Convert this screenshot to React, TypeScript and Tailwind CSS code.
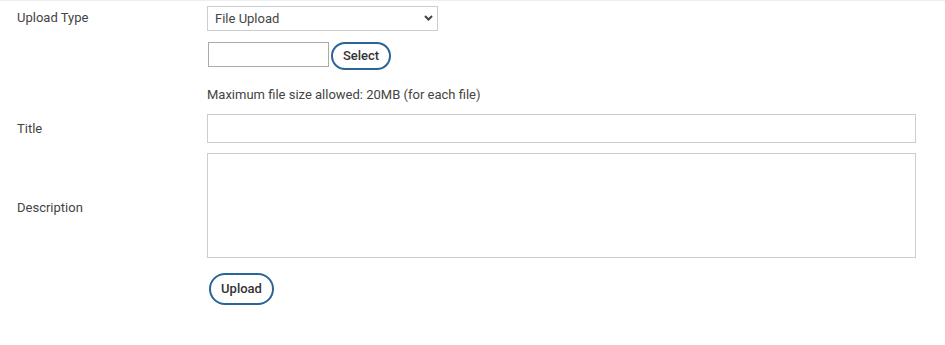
import React from "react";

const labelCls = "w-[190px] shrink-0 text-[13px] text-[#444]";

const App = () => {
  return (
    <div className="w-[945px] h-[345px] bg-white border-t border-[#eeeeee] pl-[17px] pr-[29px] pt-[5px] font-['Roboto','Liberation_Sans',sans-serif] text-[13px] text-[#444]">
      <div className="flex">
        <div className={`${labelCls} pt-[4px] leading-[15px]`}>Upload Type</div>
        <div className="flex flex-col">
          <div className="relative w-[231px] h-[25px]">
            <select className="appearance-none w-full h-full border border-[#c8ced6] bg-white pl-[7px] text-[13px] text-[#444] outline-none">
              <option>File Upload</option>
            </select>
            <svg
              className="absolute right-[4px] top-[8px] pointer-events-none"
              width="11"
              height="8"
              viewBox="0 0 11 8"
            >
              <path d="M2 2 L5.5 5.5 L9 2" fill="none" stroke="#444" strokeWidth="2" />
            </svg>
          </div>
          <div className="flex items-start mt-[11px]">
            <div className="w-[121px] h-[25px] ml-[1px] border border-[#aaaaaa] bg-white" />
            <button className="ml-[2px] w-[60px] h-[28px] pb-[2px] rounded-full border-2 border-[#2b6496] bg-white text-[13px] font-medium text-[#333] leading-none">
              Select
            </button>
          </div>
          <p className="mt-[17px] leading-[15px] text-[13px] text-[#444]">
            Maximum file size allowed: 20MB (for each file)
          </p>
        </div>
      </div>

      <div className="flex items-center mt-[12px]">
        <div className={`${labelCls} leading-[15px] pb-[1px]`}>Title</div>
        <input className="flex-1 h-[29px] border border-[#c8ced6] bg-white outline-none" />
      </div>

      <div className="flex items-center mt-[10px]">
        <div className={`${labelCls} leading-[15px] pt-[4px]`}>Description</div>
        <textarea className="flex-1 h-[105px] border border-[#c8ced6] bg-white outline-none resize-none" />
      </div>

      <div className="flex mt-[15px]">
        <div className="w-[190px] shrink-0" />
        <button className="ml-[2px] w-[65px] h-[32px] pb-[2px] rounded-full border-2 border-[#2b6496] bg-white text-[13px] font-medium text-[#333] leading-none">
          Upload
        </button>
      </div>
    </div>
  );
};

export default App;
